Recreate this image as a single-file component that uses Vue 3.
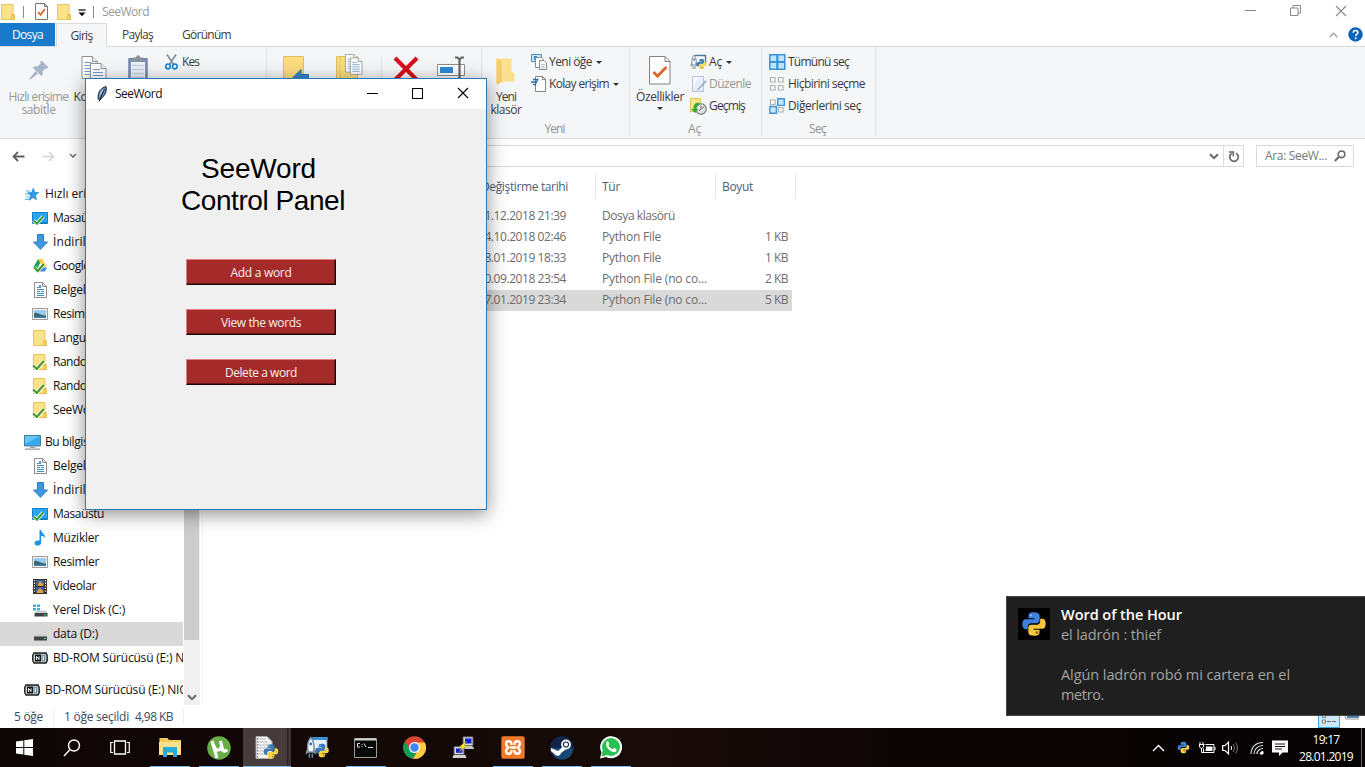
<script setup>
import { h } from 'vue'

const pyBlue = 'M8 .8C5.2.8 4.6 1.8 4.6 3v1.5h3.6v.6H3C1.500 5.100.8 6.300.8 8.200s.8 3 2 3h1.400V9.500c0-1.200.9-2 2-2h3.500c1 0 1.800-.8 1.800-1.800V3c0-1.500-1.300-2.200-3.500-2.200z'
const py = (x, y, s, a = '#3b78b4', b = '#fbd444') =>
  `<g transform="translate(${x} ${y}) scale(${s / 16})"><path fill="${a}" d="${pyBlue}"/><path fill="${b}" transform="rotate(180 8 8)" d="${pyBlue}"/><circle cx="6.200" cy="2.700" r=".6" fill="#a8c8ee"/><circle cx="9.800" cy="13.300" r=".8" fill="#7a6a20"/></g>`
const folder = '<path d="M1.500.5h11.500v9l1.500 1.200V15.500H1.500z" fill="#fde28d" stroke="#e9c35f"/><path d="M11.500 10.500v5h2.500v-5z" fill="#f9d775" stroke="#e6b94d"/>'
const tick = '<path d="M.8 11.500l4 3.700 7-8" fill="none" stroke="#fff" stroke-width="4"/><path d="M1 11.500l3.800 3.500 7-8" fill="none" stroke="#4e9a2b" stroke-width="2.300"/>'
const page = '<path d="M.5.5h8l4 4v11H.5z" fill="#fff" stroke="#8b8b8b"/><path d="M8.500.5v4h4" fill="none" stroke="#8b8b8b"/>'
const sheet = (x, y) => `<g transform="translate(${x} ${y})"><path d="M.5.5h10.500l5 5v17H.5z" fill="#fff" stroke="#8e9297"/><path d="M11 .5v5h5" fill="#eee" stroke="#8e9297"/><path d="M3 6.500h7M3 9.500h10M3 12.500h10M3 15.500h10M3 18.500h10" stroke="#6d9bd3"/></g>`
const picture = '<path d="M.5.5h15v11H.5z" fill="#fff" stroke="#999"/><path d="M2 2h12v8H2z" fill="#9bcdf0"/><path d="M2 5c3-1 5 1 8 2l4 .5V10H2z" fill="#3d6674"/><path d="M2 8.500h12V10H2z" fill="#3e79b0"/>'
const disc = '<path d="M2 1h12l1.200 2.500v5L14 11H2L.8 8.500v-5z" fill="#cfd3d6" stroke="#1c1c1c" stroke-width="1.400"/><path d="M3 2.500h6v7H3z" fill="#151515"/><path d="M4.500 7.800V4.500l2.500 3V4.300" fill="none" stroke="#fff"/><path d="M9.500 2.500h3.800v7H9.500z" fill="#6688a0"/><path d="M11.400 3.500v5" stroke="#e2f4ff" stroke-width="1.300"/>'
const rocket = '<path d="M4 1C1.500 4 1.500 8 2.200 11h3.600C6.500 8 6.500 4 4 1z" fill="#f7f9fb" stroke="#7b8fa3"/><path d="M2 8L.6 11v2l2-2zM6 8l1.400 3v2l-2-2z" fill="#8799aa"/><circle cx="4" cy="5.500" r="1" fill="#3d6f9d"/><path d="M3 12v3M5 12v3" stroke="#6c8aa8"/>'

const icons = {
  folder: [16, 16, folder],
  folderOk: [16, 16, folder + tick],
  docTick: [13, 17, '<path d="M.5.5h9l3 3v13H.5z" fill="#fff" stroke="#777"/><path d="M9.500.5v3h3" fill="none" stroke="#777"/><path d="M3 9l2.500 2.800L10 6" fill="none" stroke="#e1622c" stroke-width="1.800"/>'],
  qatDrop: [8, 8, '<path d="M.5 1h7" stroke="#111" stroke-width="1.300"/><path d="M.5 3.500h7L4 7.300z" fill="#111"/>'],
  min: [11, 11, '<path d="M0 5.500h11" stroke="currentColor"/>'],
  max: [11, 11, '<path d="M.5.500h10v10H.5z" fill="none" stroke="currentColor" stroke-width="1.100"/>'],
  restore: [11, 11, '<path d="M.5 3h7.500v7.500H.5zM3 3V.5h7.500V8H8" fill="none" stroke="currentColor"/>'],
  close: [12, 12, '<path d="M1 1l10 10M11 1L1 11" stroke="currentColor" stroke-width="1.100"/>'],
  chevUp: [9, 6, '<path d="M.7 5l3.800-3.800L8.300 5" fill="none" stroke="#a0a0a0" stroke-width="1.400"/>'],
  help: [15, 15, '<circle cx="7.500" cy="7.500" r="7.200" fill="#0a64bd"/><path d="M5.200 5.700c0-3 4.700-3 4.700-.2 0 1.700-2.200 1.700-2.200 3.600" fill="none" stroke="#fff" stroke-width="1.500"/><circle cx="7.700" cy="11.300" r="1" fill="#fff"/>'],
  pin: [20, 20, '<g fill="#a9b6c9"><path d="M12.500.5L19.500 7.500l-1.500 1.300-1.300-.6-3.200 3.300c.6 1.800.2 3.600-1 4.800L3.700 7.500c1.300-1.200 3-1.500 4.800-1l3.300-3.200-.6-1.400z"/><path d="M6.500 11l2.500 2.500-8 6.300-.8-.8z"/></g>'],
  copy: [26, 30, sheet(0.5, 0) + sheet(9, 7)],
  clip: [20, 30, '<path d="M.8 3.500h18.400V29.500H.8z" fill="#7f93b2" stroke="#6e83a5"/><path d="M3 7h14v21H3z" fill="#eef3fa"/><path d="M4 10.500h12M4 14.500h12M4 18.500h12M4 22.500h12" stroke="#c1cfe4" stroke-width="1.500"/><path d="M5 2.500h3c0-3 4-3 4 0h3V6H5z" fill="#8c9098"/>'],
  cut: [13, 16, '<path d="M2 .5l6.500 10M11 .5L4.500 10.500" stroke="#858c93" stroke-width="1.600"/><circle cx="3" cy="12.500" r="2.300" fill="none" stroke="#1787cf" stroke-width="1.700"/><circle cx="9.800" cy="12.500" r="2.300" fill="none" stroke="#1787cf" stroke-width="1.700"/>'],
  moveTo: [26, 30, '<path d="M.5.5h20v25H.5z" fill="#fbdc7f" stroke="#e4bf60"/><path d="M18 13.500v5h8v6h-8v5l-8-8z" fill="#3487cf" stroke="#2470b0"/>'],
  copyTo: [27, 30, '<path d="M.5 2.500h21v25H.5z" fill="#fbdc7f" stroke="#e4bf60"/><path d="M4 3v24" stroke="#e9c66a"/><g transform="translate(9 0) scale(.8)">' + sheet(0, 0) + '</g><g transform="translate(14 3.500) scale(.75)">' + sheet(0, 0) + '</g>'],
  del: [26, 26, '<path d="M2 2l22 22M24 2L2 24" stroke="#d6101c" stroke-width="4.200"/>'],
  rename: [28, 28, '<path d="M.5 8.500h27v11H.5z" fill="#fff" stroke="#8b8f94"/><path d="M3 11h13v6H3z" fill="#2c8bd8"/><path d="M18 1.500h2.500l2 2 2-2H27M22.500 3v22" fill="none" stroke="#666" stroke-width="2.200"/>'],
  newFolder: [20, 27, '<path d="M.5.5h15v14h3v9H5l-4.500 3z" fill="#fbdf8a"/><path d="M.5.5l6 2v21l-5 3-1-1z" fill="#f5cf6c"/><path d="M6.500 2.500v21" stroke="#fbe8ab"/>'],
  newItem: [17, 17, '<path d="M.5.5h10v7H.5z" fill="#cbe6f8" stroke="#4f8dbd"/><path d="M3 2v4h3V2z" fill="#3884bb"/><path d="M4.500 3.500h6l2 2v8h-8z" fill="#fff" stroke="#8a8a8a"/><path d="M8.500 6.500h4.500l2.500 2.500v6.500h-7z" fill="#fff" stroke="#8a8a8a"/><path d="M10 10.500h4M10 12.500h4M10 14h4" stroke="#b5c5da"/>'],
  easy: [16, 16, '<path d="M4.500.5h7l3 3v12h-10z" fill="#fff" stroke="#858585"/><path d="M11.500.5v3h3" fill="none" stroke="#858585"/><path d="M2 3.500h5.500M0 6h6M2 8.500h3M7 3L4 9" stroke="#2f6ca3" stroke-width="1.300"/>'],
  props: [22, 29, '<path d="M.5.5h15.500l5 5v22.500H.5z" fill="#fff" stroke="#808080"/><path d="M16 .5v5h5" fill="none" stroke="#808080"/><path d="M4.500 16l4 4.300 9-9.300" fill="none" stroke="#e2642b" stroke-width="2.800"/>'],
  openPy: [17, 17, '<path d="M5 1.500h10.500v9" fill="#fff" stroke="#4b7d9f" stroke-width="1.500"/>' + rocket + py(6, 4.5, 11)],
  edit: [15, 16, '<path d="M.5.500h11v15H.5z" fill="#e8eefa" stroke="#b4c3dd"/><path d="M1 1h6L1 10z" fill="#f7faff"/><path d="M13.500 4L6 12.500l-1.500 2 2.500-1L14.500 6z" fill="#9badc9"/>'],
  history: [17, 17, '<path d="M.5.500h10v13H.5z" fill="#ffe58a" stroke="#e4c05b"/><circle cx="11" cy="11" r="5.200" fill="#dfe3e3" stroke="#8a8f8f" stroke-width="1.500"/><path d="M11 7.500v3.700l3-2.500M11 11l-2 2" stroke="#777" fill="none"/><path d="M9 4.500v3C7 7.500 6 9 6.500 11H8.500l-3.500 4-4-4h2.500C3 7 5 4.500 9 4.500z" fill="#3da537"/>'],
  selAll: [17, 16, '<path d="M.8.8h15v14.400H.8z" fill="#bfe3fb" stroke="#3993d5" stroke-width="1.500"/><path d="M8.300 0v16M0 8h16" stroke="#3993d5" stroke-width="2.200"/>'],
  selNone: [17, 16, '<path d="M1.500 1.500h4.500v4.500H1.500zM9.500 1.500h4.500v4.500H9.500zM1.500 9.500h4.500v4.500H1.500zM9.500 9.500h4.500v4.500H9.500z" fill="#fff" stroke="#b0b0b0" stroke-width="1.200"/>'],
  selInv: [17, 16, '<path d="M1.500 2h4.500v4.500H1.500zM9.500 9.500h4.500v4.500H9.500z" fill="#fff" stroke="#b0b0b0" stroke-width="1.200"/><path d="M8.700.8h6.600v6.600H8.700zM.8 8.500h6.600v6.700H.8z" fill="#c7e7fb" stroke="#3c96d6" stroke-width="1.400"/>'],
  back: [13, 11, '<path d="M12.500 5.500H1.500M6 1L1.500 5.500 6 10" fill="none" stroke="#5f5f5f" stroke-width="1.800"/>'],
  fwd: [13, 11, '<path d="M.5 5.500h11M7 1l4.500 4.500L7 10" fill="none" stroke="#d2d2d2" stroke-width="1.600"/>'],
  chevDown: [8, 6, '<path d="M1 1l3 3 3-3" fill="none" stroke="#777" stroke-width="1.600"/>'],
  chevBig: [10, 7, '<path d="M1 1.200l4 4 4-4" fill="none" stroke="#666" stroke-width="2"/>'],
  refresh: [12, 13, '<path d="M8 3.200A4.300 4.300 0 1 1 3.600 3.500" fill="none" stroke="#666" stroke-width="1.700"/><path d="M1 2h4.300v4.300" fill="none" stroke="#666" stroke-width="1.600"/>'],
  lens: [12, 12, '<circle cx="7.500" cy="4.300" r="3.300" fill="none" stroke="#686868" stroke-width="1.600"/><path d="M5 6.800L.8 11" stroke="#686868" stroke-width="2"/>'],
  star: [14, 13, '<path d="M8.200.3l1.500 4 4 .3-3.200 2.700 1 4.500-3.500-2.400-3.800 2.800 1.300-4.600L2.500 4.700l4.200-.2z" fill="#2d9be8" stroke="#1b7ac6" stroke-width=".6"/><path d="M1 3h4M0 6h4M1 9h3M0 11.500h4" stroke="#55b3f0"/>'],
  desktop: [16, 13, '<path d="M.5.500h15v11H.5z" fill="#29a5f5" stroke="#1b7fc4"/><path d="M8 11h7" stroke="#0c6dae"/><path d="M1.500 8.500L5 11.700 11 4.500" fill="none" stroke="#fff" stroke-width="3.600"/><path d="M1.500 8.500L5 11.700 11 4.500" fill="none" stroke="#3e9d30" stroke-width="2.100"/>'],
  down: [15, 16, '<path d="M4.500.5h6v7.500h4L7.500 15.300.5 8h4z" fill="#3f97e0" stroke="#2c7cc3"/>'],
  drive: [15, 14, '<path d="M5 0h4.500l4.500 8H9.300z" fill="#fbd03f"/><path d="M5 0L.3 8.300l2.200 4.200L7.300 4z" fill="#22a263"/><path d="M4.800 8.500H14L12 12.500H2.500z" fill="#4687ee"/><path d="M1.500 8.500l3.300 3.500 6-7" fill="none" stroke="#fff" stroke-width="3.600"/><path d="M1.500 8.500l3.300 3.500 6-7" fill="none" stroke="#469a2b" stroke-width="2.200"/>'],
  doc: [13, 16, page + '<path d="M3 5.500h3M3 7.500h7M3 9.500h3M7 9.500h3M3 11.500h7M3 13.500h7" stroke="#3e87bd"/><path d="M5 3h2v3H5z" fill="#559bcc"/>'],
  pic: [16, 12, picture],
  pc: [17, 15, '<path d="M.5.500h16v10.500H.5z" fill="#35aaf0" stroke="#4a7995"/><path d="M1 1h15L1 9z" fill="#65c6f8"/><path d="M6 12.500h5M1 14.200h15" stroke="#8c9ba6" stroke-width="1.200"/>'],
  music: [12, 16, '<path d="M5.500 0h1.700c0 3 4.500 4 4 8.500-.6-1.800-2-2.400-4-2.700v6.700c0 4-6.700 4-6.700.8 0-2.300 2.500-3.200 5-2.500z" fill="#1b93e0"/>'],
  video: [14, 15, '<path d="M0 0h14v15H0z" fill="#302d2b"/><path d="M1.500 1v13M12.500 1v13" stroke="#e8e8e8" stroke-width="1.300" stroke-dasharray="1.300 1.300"/><path d="M3 1h8v6H3z" fill="#4366a0"/><path d="M3 8h8v6H3z" fill="#3c5e9a"/><path d="M5 5l2-3 3 3v2H5zM4 12l3-3 3 3v2H4z" fill="#d9a33a"/>'],
  diskWin: [15, 13, '<path d="M0 .5h3v2.500H0zM4 .5h3v2.500H4zM0 4h3v2.500H0zM4 4h3v2.500H4z" fill="#27b6ee"/><path d="M3 6.500h10l1.500 2.500h-13z" fill="#c9cccd"/><path d="M1.500 9h13v3.500h-13z" fill="#3c4245"/><path d="M11 11h2" stroke="#55e07a"/>'],
  disk: [13, 13, '<path d="M1.500 6.500h10l1.500 2H0z" fill="#c9cccd"/><path d="M0 8.500h13v4H0z" fill="#3c4245"/><path d="M10 10.500h2" stroke="#55e07a"/>'],
  disc: [16, 12, disc],
  feather: [12, 17, '<path d="M10 .5C5 2 1.500 6 2.200 13l2 .5C9.500 9 11 5 10 .5z" fill="#6f8fbf" stroke="#0d1526" stroke-width="1"/><path d="M8.500 3L3 15.500" stroke="#0d1526" stroke-width="1"/><path d="M7 3.500L4 8.500" stroke="#c6d6ef" stroke-width="1.200"/>'],
  viewList: [22, 14, '<path d="M.5-5h21v18.500H.5z" fill="#cbe8f8" stroke="#3ba3d8"/><path d="M4.500.5h3v3h-3zM4.500 6h3v3h-3z" fill="#fff" stroke="#777"/><path d="M9 1.500h4M14 1.500h4M9 7.500h4M14 7.500h4" stroke="#666"/>'],
  viewPic: [14, 12, '<g transform="translate(0 -6.500)">' + picture + '</g>'],
  pyBig: [32, 32, '<path d="M0 0h32v32H0z" fill="#000"/>' + py(3, 3, 26, '#3d7fdd', '#f7c63d')],
  start: [17, 17, '<path d="M0 2.500L7.300 1.500V8H0zM8.300 1.300L17 0v8H8.300zM0 9h7.300v6.500L0 14.500zM8.300 9H17v8l-8.700-1.300z" fill="#fff"/>'],
  find: [18, 18, '<circle cx="11" cy="6.500" r="5.500" fill="none" stroke="#fff" stroke-width="1.400"/><path d="M7 10.500L1 17" stroke="#fff" stroke-width="1.400"/>'],
  tasks: [20, 15, '<path d="M4.500 1h11v13h-11z" fill="none" stroke="#fff" stroke-width="1.300"/><path d="M3 2.500H.7v10H3M17 2.500h2.300v10H17" fill="none" stroke="#fff" stroke-width="1.200"/>'],
  explorer: [22, 19, '<path d="M.5 0h8l1.500 2H22v15H.5z" fill="#f4cb59"/><path d="M0 4h22v13H0z" fill="#fde08a"/><path d="M4 9h14v10h-4v-4.500H8V19H4z" fill="#2aa9dc"/>'],
  utor: [24, 24, '<circle cx="12" cy="12" r="11.800" fill="#68ad46"/><path d="M5 5l5 17M7 9.500c1 6 7.500 6 7.500-.3M13.500 5l2 8.500c.6 2.300 3 2 4.500 0" fill="none" stroke="#fff" stroke-width="3.200"/>'],
  pyFile: [24, 24, '<path d="M1 .5h11l5 5v17H1z" fill="#f3f3f3" stroke="#aaa"/><path d="M3 3h8M3 6h10M3 9h11M3 12h10M3 15h10M3 18h10" stroke="#bcbcbc"/><path d="M2.500 2v20" stroke="#777" stroke-dasharray="1.500 1.500"/>' + py(8, 7.5, 16)],
  pyRocket: [24, 24, '<path d="M8 1.500h14v13H8z" fill="#e7f1f8" stroke="#4693cf"/><path d="M7.500 2.500H22.500" stroke="#3c91d3" stroke-width="3"/><g transform="scale(1.450)">' + rocket + '</g>' + py(9.5, 7, 15)],
  cmd: [23, 20, '<path d="M.5.500h22v19H.5z" fill="#090909" stroke="#9c9c9c"/><path d="M1 1.500h21" stroke="#d3d3d3" stroke-width="2"/><path d="M6 5.500H3.500v3.500H6M8 6v1M8 8v1M10 5.500l2 3.500M14 9.500h5" fill="none" stroke="#ddd"/>'],
  chrome: [23, 23, '<circle cx="11.500" cy="11.500" r="11.300" fill="#db4437"/><path d="M1.700 5.800A11.300 11.300 0 0 0 10 22.700l4.800-8.500h-6.500z" fill="#0f9d58"/><path d="M11.500 6.500h10.300A11.300 11.300 0 0 1 10 22.700l5.200-8.500z" fill="#ffcd40"/><circle cx="11.500" cy="11.500" r="5.500" fill="#f4f4f4"/><circle cx="11.500" cy="11.500" r="4.200" fill="#4285f4"/>'],
  putty: [23, 23, '<path d="M11 .8h10v9H11z" fill="#d8d8d8" stroke="#555"/><path d="M13 2.500h6.500v5H13z" fill="#131edb"/><path d="M11 10h9l2 2v1H9.500z" fill="#c6c6c6"/><path d="M2 10.500h10v8H2z" fill="#d8d8d8" stroke="#555"/><path d="M4 12.500h6.500v4.300H4z" fill="#131edb"/><path d="M1.500 19h12l1 3H.5z" fill="#d4d4d4"/><path d="M14.500 5L7 11h3.500L7 16l8.500-6.500h-3.500z" fill="#ffef1d" stroke="#8a7b05" stroke-width=".4"/>'],
  xampp: [24, 23, '<rect x=".5" y=".3" width="23" height="22.400" rx="2" fill="#f07a2b" stroke="#c95c17" stroke-width=".6"/><path d="M10.500 9V7.500a2.800 2.800 0 0 0-5.500 0c0 1.800 1 3 2.200 4-1.200 1-2.200 2.200-2.200 4a2.800 2.800 0 0 0 5.500 0V14M13.500 9V7.500a2.800 2.800 0 0 1 5.500 0c0 1.800-1 3-2.200 4 1.200 1 2.200 2.200 2.200 4a2.800 2.800 0 0 1-5.500 0V14M9 11.500h6" fill="none" stroke="#fff" stroke-width="2.300"/>'],
  steam: [24, 24, '<circle cx="12" cy="12" r="11.500" fill="#174875"/><path d="M.5 12a11.500 11.500 0 0 1 23 0z" fill="#10244a"/><circle cx="16" cy="8.500" r="4" fill="#10244a" stroke="#fff" stroke-width="1.800"/><circle cx="16" cy="8.500" r="2" fill="#fff"/><path d="M1 12l7 3 5-4.500 3 2.800-5 3.700a3.500 3.500 0 0 1-6.500 1L.8 15z" fill="#fff"/>'],
  wa: [23, 23, '<path d="M1 22.500l1.500-6A11 11 0 1 1 7 20.900z" fill="#fff"/><circle cx="12" cy="11" r="9" fill="#27c152"/><path d="M3.800 14l-1.300 6.500 6-1.500z" fill="#27c152"/><path d="M7.500 6c1-1 1.700-.8 2 .2l.7 1.600c.2.8-1 1.300-.6 2 1 1.700 2.200 2.700 3.800 3.400.7.200 1.200-1.500 2-1.200l2 1c.8.500-.2 3-2.200 3.200C10.500 16 5.500 10 7.500 6z" fill="#fff"/>'],
  trayUp: [13, 8, '<path d="M1 7l5.500-5.500L12 7" fill="none" stroke="#fff" stroke-width="1.400"/>'],
  pyTray: [13, 13, py(0, 0, 13, '#3d7fd5', '#f9cd4e')],
  battery: [17, 12, '<path d="M1 0v2.500M4 0v2.500M0 2.500h5.500M.5 3v2l2 1.500 2-1.500V3M2.500 6v4.500H6" fill="none" stroke="#fff"/><path d="M6.500 2.500h8.500v8H4.500v-4" fill="none" stroke="#fff"/><path d="M7 4.500h6.500v4.500H6.500z" fill="#fff"/><path d="M16 5v3" stroke="#fff"/>'],
  volume: [17, 14, '<path d="M.7 4.700H3l3.500-3.500v11.600L3 9.500H.7z" fill="none" stroke="#fff" stroke-width="1.200"/><path d="M9 5q1.300 2 0 4" fill="none" stroke="#fff"/><path d="M11.300 3q2.600 4 0 8M13.700 1.500q3.500 5.500 0 11" fill="none" stroke="#777"/>'],
  wifi: [14, 14, '<path d="M1 13C1 6 6 1.500 13 1.500M4 13c0-5 4-8.500 9-8.500M7 13c0-3.500 3-5.500 6-5.500" fill="none" stroke="#ddd" stroke-width="1.200"/><path d="M10 13c0-1.500 1.500-2.500 3-2.500V13z" fill="#fff" stroke="#fff"/>'],
  note: [16, 16, '<path d="M0 .5h16v12H10.500L7 16v-3.500H0z" fill="#fff"/><path d="M3 4h10M3 6.500h10M3 9h7" stroke="#111" stroke-width="1.200"/>'],
}

const Ico = ({ n }) => {
  const [w, ht, body] = icons[n]
  return h('svg', { width: w, height: ht, viewBox: `0 0 ${w} ${ht}`, 'aria-hidden': 'true', class: 'ico', innerHTML: body })
}
Ico.props = ['n']

/* Spreads the letters of a label so that it takes the given width. */
const vFit = {
  mounted(el, { value }) {
    if (!value) return
    const natural = el.getBoundingClientRect().width
    el.style.letterSpacing = (value - natural) / el.textContent.length + 'px'
  },
}

const quick = [
  ['desktop', 'Masaüstü', 51], ['down', 'İndirilenler', 62], ['drive', 'Google Drive', 66], ['doc', 'Belgeler', 44], ['pic', 'Resimler', 45],
  ['folder', 'Language', 52], ['folderOk', 'Random', 44], ['folderOk', 'Random', 44], ['folderOk', 'SeeWord', 48],
]
const pc = [
  ['doc', 'Belgeler', 44], ['down', 'İndirilenler', 62], ['desktop', 'Masaüstü', 51], ['music', 'Müzikler', 46], ['pic', 'Resimler', 46],
  ['video', 'Videolar', 43], ['diskWin', 'Yerel Disk (C:)', 72], ['disk', 'data (D:)', 45], ['disc', 'BD-ROM Sürücüsü (E:) NICE', 148],
]
const files = [
  ['31.12.2018 21:39', 'Dosya klasörü', 73, ''],
  ['14.10.2018 02:46', 'Python File', 59, '1 KB'],
  ['28.01.2019 18:33', 'Python File', 59, '1 KB'],
  ['20.09.2018 23:54', 'Python File (no co...', 105, '2 KB'],
  ['27.01.2019 23:34', 'Python File (no co...', 105, '5 KB'],
]
const apps = [
  ['explorer', 1], ['utor', 1], ['pyFile', 2], ['pyRocket', 0], ['cmd', 1], ['chrome', 0], ['putty', 0], ['xampp', 1], ['steam', 1], ['wa', 1],
]
const buttons = [['Add a word', 61], ['View the words', 80], ['Delete a word', 72]]
</script>

<template>
  <div class="screen">
    <main class="explorer">
      <header class="titlebar">
        <Ico n="folder" /><i class="sep s1"></i><Ico n="docTick" class="q1" /><Ico n="folder" class="q2" /><Ico n="qatDrop" class="q3" /><i class="sep s2"></i>
        <span v-fit="47" class="t">SeeWord</span>
        <div class="winctl"><Ico n="min" /><Ico n="restore" /><Ico n="close" /></div>
      </header>
      <nav class="tabs">
        <div class="tab file"><span v-fit="31">Dosya</span></div>
        <div class="tab on"><span v-fit="22">Giriş</span></div>
        <div class="tab share"><span v-fit="31">Paylaş</span></div>
        <div class="tab view"><span v-fit="49">Görünüm</span></div>
        <div class="tabend"><Ico n="chevUp" /><Ico n="help" /></div>
      </nav>
      <section class="ribbon">
        <div class="group g1">
          <div class="row">
            <div class="big dim b77"><div class="pic up2"><Ico n="pin" /></div><span v-fit="60">Hızlı erişime</span><span v-fit="34">sabitle</span></div>
            <div class="big b34"><div class="pic top9"><Ico n="copy" /></div><span v-fit="41">Kopyala</span></div>
            <div class="big b54"><div class="pic top8"><Ico n="clip" /></div></div>
            <div class="smalls"><div class="small"><Ico n="cut" /><span v-fit="17" class="kes">Kes</span></div></div>
          </div>
        </div>
        <div class="group g2">
          <div class="row">
            <div class="big b54"><div class="pic top9"><Ico n="moveTo" /></div></div>
            <div class="big b52"><div class="pic top7"><Ico n="copyTo" /></div></div>
            <i class="insep"></i>
            <div class="big b48"><div class="pic top9"><Ico n="del" /></div></div>
            <div class="big b42"><div class="pic top9"><Ico n="rename" /></div></div>
          </div>
        </div>
        <div class="group g3">
          <div class="row">
            <div class="big b48"><div class="pic top11"><Ico n="newFolder" /></div><span v-fit="20">Yeni</span><span v-fit="31">klasör</span></div>
            <div class="smalls">
              <div class="small"><Ico n="newItem" /><span v-fit="43">Yeni öğe</span><b class="drop"></b></div>
              <div class="small"><Ico n="easy" /><span v-fit="60">Kolay erişim</span><b class="drop"></b></div>
            </div>
          </div>
          <div class="label"><span v-fit="20">Yeni</span></div>
        </div>
        <div class="group g4">
          <div class="row">
            <div class="big b60"><div class="pic top9"><Ico n="props" /></div><span v-fit="48">Özellikler</span><b class="drop under"></b></div>
            <div class="smalls">
              <div class="small"><Ico n="openPy" /><span v-fit="13">Aç</span><b class="drop"></b></div>
              <div class="small dim"><Ico n="edit" /><span v-fit="42">Düzenle</span></div>
              <div class="small"><Ico n="history" /><span v-fit="36">Geçmiş</span></div>
            </div>
          </div>
          <div class="label"><span v-fit="13">Aç</span></div>
        </div>
        <div class="group g5">
          <div class="row">
            <div class="smalls">
              <div class="small"><Ico n="selAll" /><span v-fit="61">Tümünü seç</span></div>
              <div class="small"><Ico n="selNone" /><span v-fit="77">Hiçbirini seçme</span></div>
              <div class="small"><Ico n="selInv" /><span v-fit="73">Diğerlerini seç</span></div>
            </div>
          </div>
          <div class="label"><span v-fit="17">Seç</span></div>
        </div>
      </section>
      <section class="address">
        <Ico n="back" /><Ico n="fwd" class="a2" /><Ico n="chevDown" class="a3" />
        <div class="path"><Ico n="chevBig" /><div class="reload"><Ico n="refresh" /></div></div>
        <div class="search"><span v-fit="62">Ara: SeeW...</span><Ico n="lens" /></div>
      </section>
      <section class="body">
        <aside class="tree">
          <div class="node root"><div class="slot w18"><Ico n="star" /></div><span v-fit="61">Hızlı erişim</span></div>
          <div v-for="(q, i) in quick" :key="i" class="node"><div class="slot"><Ico :n="q[0]" /></div><span v-fit="q[2]">{{ q[1] }}</span></div>
          <div class="node root gap"><div class="slot w18"><Ico n="pc" /></div><span v-fit="66">Bu bilgisayar</span></div>
          <div v-for="(q, i) in pc" :key="'p' + i" class="node" :class="{ sel: q[0] === 'disk' }"><div class="slot"><Ico :n="q[0]" /></div><span v-fit="q[2]">{{ q[1] }}</span></div>
          <div class="node root gap"><div class="slot w18"><Ico n="disc" /></div><span v-fit="148">BD-ROM Sürücüsü (E:) NICE</span></div>
        </aside>
        <div class="scroll"><div class="thumb"></div><Ico n="chevBig" /></div>
        <div class="list">
          <div class="cols"><div class="c1"><span v-fit="87">Değiştirme tarihi</span></div><div class="c2"><span v-fit="18">Tür</span></div><div class="c3"><span v-fit="31">Boyut</span></div></div>
          <div v-for="(f, i) in files" :key="i" class="file-row" :class="{ sel: i === 4 }">
            <span class="d"><span v-fit="88" class="in">{{ f[0] }}</span></span><span class="k"><span v-fit="f[2]" class="in">{{ f[1] }}</span></span><span class="s"><span v-if="f[3]" v-fit="23">{{ f[3] }}</span></span>
          </div>
        </div>
      </section>
      <footer class="status">
        <span v-fit="29">5 öğe</span><i></i><span v-fit="65">1 öğe seçildi</span><span v-fit="38" class="kb">4,98 KB</span><i></i>
        <div class="views"><Ico n="viewList" /><Ico n="viewPic" /></div>
      </footer>
    </main>

    <div class="dialog">
      <div class="dbar"><Ico n="feather" /><span v-fit="47">SeeWord</span><div class="dctl"><Ico n="min" /><Ico n="max" /><Ico n="close" /></div></div>
      <div class="dbody">
        <h1><span v-fit="115" class="l1">SeeWord</span><span v-fit="164" class="l2">Control Panel</span></h1>
        <button v-for="b in buttons" :key="b[0]"><span v-fit="b[1]">{{ b[0] }}</span></button>
      </div>
    </div>

    <div class="toast">
      <Ico n="pyBig" />
      <div class="msg">
        <strong v-fit="121">Word of the Hour</strong>
        <span v-fit="100">el ladrón : thief</span>
        <span class="second" v-fit="229">Algún ladrón robó mi cartera en el</span>
        <span v-fit="43">metro.</span>
      </div>
    </div>

    <footer class="taskbar">
      <div class="sys"><Ico n="start" /></div><div class="sys"><Ico n="find" /></div><div class="sys"><Ico n="tasks" /></div>
      <div class="apps"><div v-for="a in apps" :key="a[0]" class="app" :class="{ run: a[1] === 1, active: a[1] === 2 }"><Ico :n="a[0]" /></div></div>
      <div class="tray"><Ico n="trayUp" /><Ico n="pyTray" class="y1" /><Ico n="battery" class="y2" /><Ico n="volume" class="y3" /><Ico n="wifi" class="y4" /><Ico n="note" class="y5" /></div>
      <div class="clock"><span v-fit="27">19:17</span><span v-fit="54">28.01.2019</span></div>
      <i class="peek"></i>
    </footer>
  </div>
</template>

<style>
body { margin: 0; overflow: hidden; }
</style>
<style scoped>
.screen { position: relative; width: 1365px; height: 767px; overflow: hidden; display: flex; flex-direction: column; background: #fff; font: 12px/16px "Open Sans", "Noto Sans", sans-serif; color: #111; }
.screen span, .screen strong { white-space: nowrap; display: inline-block; }
.ico { display: block; flex: none; }
.explorer { height: 728px; display: flex; flex-direction: column; }
.titlebar { height: 23px; display: flex; align-items: center; padding-left: 0; color: #999; box-sizing: border-box; }
.sep { width: 1px; height: 12px; background: #8b8b8b; }
.s1 { margin-left: 7px; }
.q1 { margin-left: 11px; }
.q2 { margin-left: 8px; }
.q3 { margin-left: 6px; margin-top: 3px; }
.s2 { margin-left: 7px; }
.t { margin-left: 8px; margin-top: 1px; }
.winctl { display: flex; align-items: center; gap: 34px; margin-left: auto; margin-right: 18px; margin-bottom: 2px; color: #888; }
.tabs { height: 24px; display: flex; border-bottom: 1px solid #dadbdc; box-sizing: border-box; color: #3c3c3c; }
.tab { display: flex; align-items: center; justify-content: center; box-sizing: border-box; height: 23px; padding-top: 1px; }
.file { width: 55px; margin-right: 1px; background: #1979ca; color: #fff; }
.on { width: 51px; height: 24px; background: #f5f6f7; border: 1px solid #dadbdc; border-bottom: 0; padding-top: 0; }
.share { width: 61px; }
.view { width: 77px; }
.tabend { margin-left: auto; display: flex; align-items: center; gap: 10px; margin-right: 2px; }
.ribbon { height: 92px; box-sizing: border-box; background: #f5f6f7; border-bottom: 1px solid #dadbdc; display: flex; color: #3b3b3b; }
.group { box-sizing: border-box; display: flex; flex-direction: column; height: 89px; border-right: 1px solid #e0e1e3; }
.g1 { width: 267px; } .g2 { width: 215px; padding-left: 2px; } .g3 { width: 148px; } .g4 { width: 132px; } .g5 { width: 114px; padding-left: 7px; }
.row { display: flex; height: 75px; }
.label { height: 14px; line-height: 14px; text-align: center; color: #939393; padding-right: 2px; }
.g5 .label { margin-left: -7px; }
.big { display: flex; flex-direction: column; align-items: center; line-height: 13px; flex: none; }
.pic { height: 43px; box-sizing: border-box; overflow: hidden; flex: none; }
.up2 { padding-top: 13px; } .top7 { padding-top: 7px; } .top8 { padding-top: 8px; } .top9 { padding-top: 9px; } .top11 { padding-top: 11px; }
.b77 { width: 77px; } .b34 { width: 34px; } .b54 { width: 54px; } .b52 { width: 52px; } .b48 { width: 48px; } .b42 { width: 42px; } .b60 { width: 60px; }
.dim { color: #969696; }
.insep { width: 1px; background: #e0e1e3; margin: 9px 0 0 6px; }
.smalls { padding-top: 4px; }
.small { height: 22px; display: flex; align-items: center; justify-content: flex-start; }
.small .ico { margin-right: 2px; }
.g1 .small .ico { margin-right: 4px; }
.g3 .small .ico { margin-right: 1px; }
.g3 .smalls { padding-left: 1px; }
.g3 .small:nth-child(2) .ico { margin-right: 2px; }
.g4 .small:nth-child(2) .ico { margin-left: 2px; }
.drop { border: 3px solid transparent; border-top: 3.500px solid #333; border-bottom: 0; margin-left: 4px; }
.under { margin: 4px 0 0; }
.address { height: 35px; box-sizing: border-box; display: flex; align-items: center; padding: 0 11px 1px 12px; color: #777; }
.a2 { margin-left: 17px; } .a3 { margin-left: 14px; }
.path { margin-left: 30px; flex: 1; height: 22px; box-sizing: border-box; border: 1px solid #d9d9d9; display: flex; align-items: center; justify-content: flex-end; }
.reload { border-left: 1px solid #d9d9d9; width: 19px; height: 20px; margin-left: 4px; display: flex; align-items: center; justify-content: center; }
.search { margin-left: 12px; width: 98px; height: 22px; box-sizing: border-box; border: 1px solid #d9d9d9; display: flex; align-items: center; justify-content: space-between; padding: 0 7px 0 8px; }
.body { height: 531px; display: flex; }
.tree { width: 184px; box-sizing: border-box; padding-top: 8px; overflow: hidden; }
.node { height: 24px; width: 183px; display: flex; align-items: center; padding-left: 31px; box-sizing: border-box; overflow: hidden; color: #111; }
.slot { width: 18px; display: flex; justify-content: center; margin-right: 4px; flex: none; }
.root { padding-left: 23px; }
.gap { margin-top: 8px; }
.sel { background: #d9d9d9; }
.scroll { width: 16px; background: #f0f0f0; display: flex; flex-direction: column; align-items: center; margin-right: 2px; }
.thumb { width: 15px; height: 466px; background: #cdcdcd; margin: 0 1px 54px 0; flex: none; align-self: flex-start; }
.list { border-left: 1px solid #f5f5f5; padding-left: 272px; color: #6d6d6d; }
.cols { display: flex; color: #4c607a; height: 25px; margin-bottom: 7px; }
.cols div { border-right: 1px solid #e5e5e5; box-sizing: border-box; padding: 5px 0 0 6px; }
.c1 { width: 121px; } .c2 { width: 120px; } .cols .c3 { width: 80px; }
.file-row { display: flex; height: 21px; line-height: 20px; width: 317px; }
.d { width: 121px; padding-left: 3px; box-sizing: border-box; }
.k { width: 120px; padding-left: 6px; box-sizing: border-box; }
.s { width: 72px; text-align: right; }
.status { height: 23px; display: flex; align-items: center; padding-left: 14px; color: #3a4a66; box-sizing: border-box; }
.status i { width: 1px; height: 16px; background: #eee; margin: 0 10px; }
.kb { margin-left: 6px; }
.views { margin-left: auto; display: flex; align-self: flex-end; gap: 5px; margin-right: 6px; height: 14px; }
.dialog { position: absolute; left: 85px; top: 78px; width: 402px; height: 432px; box-sizing: border-box; border: 1px solid #2b7ab5; background: #f0f0f0; box-shadow: 0 4px 18px rgba(0, 0, 0, .45); }
.dbar { height: 30px; background: #fff; display: flex; align-items: center; padding-left: 10px; }
.dbar span { margin-left: 7px; color: #111; }
.dctl { margin-left: auto; margin-right: 17px; display: flex; gap: 34px; color: #000; align-items: center; margin-bottom: 2px; }
.dbody { display: flex; flex-direction: column; padding-left: 100px; }
h1 { margin: 44px 0 42px -5px; font: 28px/32px "Liberation Sans", Arial, sans-serif; color: #000; display: flex; flex-direction: column; align-items: flex-start; }
.l1 { margin-left: 20px; }
button { width: 150px; height: 26px; margin-bottom: 24px; padding: 1px 0 0; background: #a52a2a; color: #f6eeee; border: 1px solid #e08080; border-right: 1px solid #180505; border-bottom: 1px solid #180505; font: 12px/16px "Open Sans", "Noto Sans", sans-serif; box-sizing: border-box; box-shadow: inset -1px -1px #6b1a1a; }
.toast { position: absolute; left: 1006px; top: 596px; width: 360px; height: 120px; box-sizing: border-box; background: #1f1f1f; border: 1px solid #454545; display: flex; padding: 11px 0 0 11px; }
.msg { margin-left: 11px; margin-top: -3px; display: flex; flex-direction: column; align-items: flex-start; font-size: 14.5px; line-height: 20px; color: #a3a3a3; }
.msg strong { color: #fff; font-weight: 600; }
.second { margin-top: 20px; }
.taskbar { height: 39px; background: linear-gradient(90deg, #0e0505 0, #150a07 40%, #190b08 48%, #0d0505 66%, #060304 100%); display: flex; }
.sys { width: 48px; display: flex; align-items: center; justify-content: center; }
.apps { display: flex; margin-left: 2px; }
.app { width: 49px; height: 39px; display: flex; align-items: center; justify-content: center; box-sizing: border-box; padding-right: 2px; }
.run { background: linear-gradient(#76b9ed, #76b9ed) 4px 38px / 40px 1px no-repeat; }
.active { background: linear-gradient(#76b9ed, #76b9ed) 0 38px / 48px 1px no-repeat, linear-gradient(90deg, #463c3b 44px, #2b2220 44px, #2b2220 45px, #3c3231 45px, #3c3231 48px, transparent 48px); margin-left: -1px; margin-right: 1px; }
.tray { margin-left: auto; display: flex; align-items: center; }
.y1 { margin-left: 12px; } .y2 { margin-left: 9px; } .y3 { margin-left: 6px; } .y4 { margin-left: 11px; } .y5 { margin-left: 8px; }
.clock { width: 54px; margin-left: 11px; padding-top: 3px; display: flex; flex-direction: column; align-items: center; color: #fff; line-height: 17px; }
.peek { width: 1px; background: #666; margin: 0 3px 0 8px; }
</style>
